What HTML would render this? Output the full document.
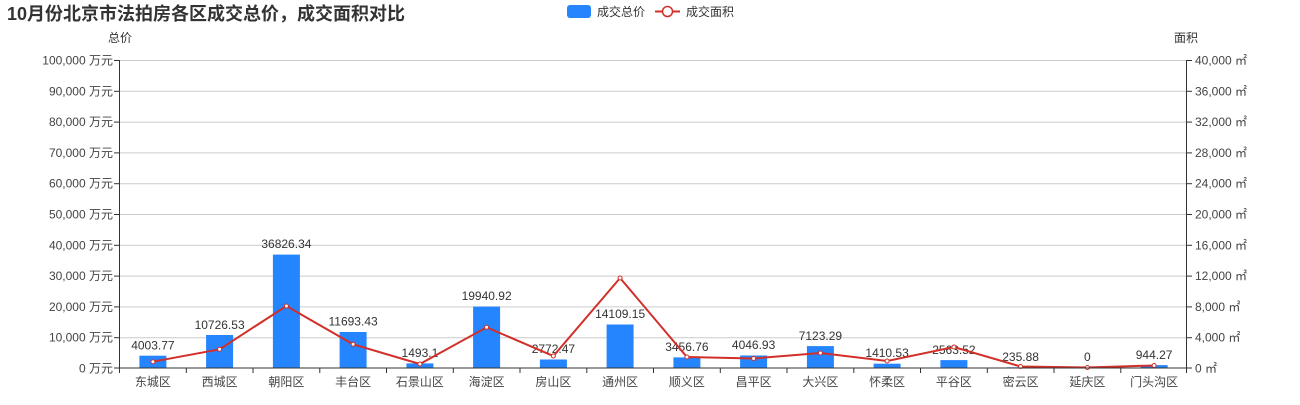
<!DOCTYPE html>
<html><head><meta charset="utf-8"><style>
body{margin:0;background:#fff;width:1300px;height:400px;overflow:hidden}
svg text{font-family:"Liberation Sans","Noto Sans CJK SC",sans-serif}
</style></head><body>
<svg width="1300" height="400" xmlns="http://www.w3.org/2000/svg">
<text x="7" y="20" font-size="18" font-weight="bold" fill="#333">10月份北京市法拍房各区成交总价，成交面积对比</text>
<rect x="567" y="5" width="24" height="13" rx="3" fill="#2585fe"/>
<text x="597" y="16" font-size="12" fill="#333">成交总价</text>
<line x1="655" y1="11.5" x2="680" y2="11.5" stroke="#d22f28" stroke-width="2"/>
<circle cx="667.5" cy="11.5" r="5" fill="#fff" stroke="#d22f28" stroke-width="1.5"/>
<text x="686" y="16" font-size="12" fill="#333">成交面积</text>
<text x="120" y="42" font-size="12" fill="#333" text-anchor="middle">总价</text>
<text x="1186" y="42" font-size="12" fill="#333" text-anchor="middle">面积</text>
<g stroke="#ccc" stroke-width="1">
<line x1="119" y1="60.5" x2="1186" y2="60.5"/><line x1="119" y1="91.3" x2="1186" y2="91.3"/>
<line x1="119" y1="122.1" x2="1186" y2="122.1"/><line x1="119" y1="152.9" x2="1186" y2="152.9"/>
<line x1="119" y1="183.7" x2="1186" y2="183.7"/><line x1="119" y1="214.5" x2="1186" y2="214.5"/>
<line x1="119" y1="245.3" x2="1186" y2="245.3"/><line x1="119" y1="276.1" x2="1186" y2="276.1"/>
<line x1="119" y1="306.9" x2="1186" y2="306.9"/><line x1="119" y1="337.7" x2="1186" y2="337.7"/>
</g>
<g font-size="12" fill="#444" text-anchor="end">
<text x="113" y="64.5">100,000 万元</text><text x="113" y="95.3">90,000 万元</text>
<text x="113" y="126.1">80,000 万元</text><text x="113" y="156.9">70,000 万元</text>
<text x="113" y="187.7">60,000 万元</text><text x="113" y="218.5">50,000 万元</text>
<text x="113" y="249.3">40,000 万元</text><text x="113" y="280.1">30,000 万元</text>
<text x="113" y="310.9">20,000 万元</text><text x="113" y="341.7">10,000 万元</text>
<text x="113" y="372.5">0 万元</text>
</g>
<g font-size="12" fill="#444">
<text x="1195" y="64.5">40,000 ㎡</text><text x="1195" y="95.3">36,000 ㎡</text>
<text x="1195" y="126.1">32,000 ㎡</text><text x="1195" y="156.9">28,000 ㎡</text>
<text x="1195" y="187.7">24,000 ㎡</text><text x="1195" y="218.5">20,000 ㎡</text>
<text x="1195" y="249.3">16,000 ㎡</text><text x="1195" y="280.1">12,000 ㎡</text>
<text x="1195" y="310.9">8,000 ㎡</text><text x="1195" y="341.7">4,000 ㎡</text>
<text x="1195" y="372.5">0 ㎡</text>
</g>
<g fill="#2585fe">
<rect x="139.4" y="355.7" width="27" height="12.3"/>
<rect x="206.1" y="335" width="27" height="33"/>
<rect x="272.9" y="254.6" width="27" height="113.4"/>
<rect x="339.6" y="332" width="27" height="36"/>
<rect x="406.4" y="363.4" width="27" height="4.6"/>
<rect x="473.1" y="306.6" width="27" height="61.4"/>
<rect x="539.9" y="359.5" width="27" height="8.5"/>
<rect x="606.6" y="324.5" width="27" height="43.5"/>
<rect x="673.4" y="357.4" width="27" height="10.6"/>
<rect x="740.1" y="355.5" width="27" height="12.5"/>
<rect x="806.9" y="346.1" width="27" height="21.9"/>
<rect x="873.6" y="363.7" width="27" height="4.3"/>
<rect x="940.4" y="360.1" width="27" height="7.9"/>
<rect x="1007.1" y="367.3" width="27" height="0.7"/>
<rect x="1140.6" y="365.1" width="27" height="2.9"/>
</g>
<g font-size="12" fill="#333" text-anchor="middle">
<text x="152.9" y="349.5">4003.77</text>
<text x="219.6" y="329">10726.53</text>
<text x="286.4" y="248">36826.34</text>
<text x="353.1" y="325.5">11693.43</text>
<text x="419.9" y="357">1493.1</text>
<text x="486.6" y="300">19940.92</text>
<text x="553.4" y="353">2772.47</text>
<text x="620.1" y="318">14109.15</text>
<text x="686.9" y="351">3456.76</text>
<text x="753.6" y="349">4046.93</text>
<text x="820.4" y="340">7123.29</text>
<text x="887.1" y="357">1410.53</text>
<text x="953.9" y="354">2563.52</text>
<text x="1020.6" y="361">235.88</text>
<text x="1087.4" y="361">0</text>
<text x="1154.1" y="359">944.27</text>
</g>
<polyline fill="none" stroke="#d22f28" stroke-width="2" points="152.9,361.7 219.6,349.3 286.4,306 353.1,344.3 419.9,364 486.6,327.3 553.4,356 620.1,278 686.9,357 753.6,358.5 820.4,353 887.1,361 953.9,347 1020.6,366.5 1087.4,367.5 1154.1,365.5"/>
<g fill="#fff" stroke="#d22f28" stroke-width="1">
<circle cx="152.9" cy="361.7" r="2"/><circle cx="219.6" cy="349.3" r="2"/><circle cx="286.4" cy="306" r="2"/><circle cx="353.1" cy="344.3" r="2"/><circle cx="419.9" cy="364" r="2"/><circle cx="486.6" cy="327.3" r="2"/><circle cx="553.4" cy="356" r="2"/><circle cx="620.1" cy="278" r="2"/><circle cx="686.9" cy="357" r="2"/><circle cx="753.6" cy="358.5" r="2"/><circle cx="820.4" cy="353" r="2"/><circle cx="887.1" cy="361" r="2"/><circle cx="953.9" cy="347" r="2"/><circle cx="1020.6" cy="366.5" r="2"/><circle cx="1087.4" cy="367.5" r="2"/><circle cx="1154.1" cy="365.5" r="2"/>
</g>
<g stroke="#333" stroke-width="1">
<line x1="119.5" y1="60" x2="119.5" y2="368"/>
<line x1="1186.5" y1="60" x2="1186.5" y2="368"/>
<line x1="119" y1="368" x2="1187" y2="368"/>
<line x1="114" y1="60.5" x2="119" y2="60.5"/><line x1="114" y1="91.3" x2="119" y2="91.3"/><line x1="114" y1="122.1" x2="119" y2="122.1"/><line x1="114" y1="152.9" x2="119" y2="152.9"/><line x1="114" y1="183.7" x2="119" y2="183.7"/><line x1="114" y1="214.5" x2="119" y2="214.5"/><line x1="114" y1="245.3" x2="119" y2="245.3"/><line x1="114" y1="276.1" x2="119" y2="276.1"/><line x1="114" y1="306.9" x2="119" y2="306.9"/><line x1="114" y1="337.7" x2="119" y2="337.7"/><line x1="114" y1="368" x2="119" y2="368"/>
<line x1="1187" y1="60.5" x2="1192" y2="60.5"/><line x1="1187" y1="91.3" x2="1192" y2="91.3"/><line x1="1187" y1="122.1" x2="1192" y2="122.1"/><line x1="1187" y1="152.9" x2="1192" y2="152.9"/><line x1="1187" y1="183.7" x2="1192" y2="183.7"/><line x1="1187" y1="214.5" x2="1192" y2="214.5"/><line x1="1187" y1="245.3" x2="1192" y2="245.3"/><line x1="1187" y1="276.1" x2="1192" y2="276.1"/><line x1="1187" y1="306.9" x2="1192" y2="306.9"/><line x1="1187" y1="337.7" x2="1192" y2="337.7"/><line x1="1187" y1="368" x2="1192" y2="368"/>
<line x1="186.3" y1="368" x2="186.3" y2="373"/><line x1="253" y1="368" x2="253" y2="373"/><line x1="319.8" y1="368" x2="319.8" y2="373"/><line x1="386.5" y1="368" x2="386.5" y2="373"/><line x1="453.3" y1="368" x2="453.3" y2="373"/><line x1="520" y1="368" x2="520" y2="373"/><line x1="586.8" y1="368" x2="586.8" y2="373"/><line x1="653.5" y1="368" x2="653.5" y2="373"/><line x1="720.3" y1="368" x2="720.3" y2="373"/><line x1="787" y1="368" x2="787" y2="373"/><line x1="853.8" y1="368" x2="853.8" y2="373"/><line x1="920.5" y1="368" x2="920.5" y2="373"/><line x1="987.3" y1="368" x2="987.3" y2="373"/><line x1="1054" y1="368" x2="1054" y2="373"/><line x1="1120.8" y1="368" x2="1120.8" y2="373"/><line x1="119.5" y1="368" x2="119.5" y2="373"/><line x1="1186.5" y1="368" x2="1186.5" y2="373"/>
</g>
<g font-size="12" fill="#444" text-anchor="middle">
<text x="152.9" y="386">东城区</text><text x="219.6" y="386">西城区</text><text x="286.4" y="386">朝阳区</text><text x="353.1" y="386">丰台区</text><text x="419.9" y="386">石景山区</text><text x="486.6" y="386">海淀区</text><text x="553.4" y="386">房山区</text><text x="620.1" y="386">通州区</text><text x="686.9" y="386">顺义区</text><text x="753.6" y="386">昌平区</text><text x="820.4" y="386">大兴区</text><text x="887.1" y="386">怀柔区</text><text x="953.9" y="386">平谷区</text><text x="1020.6" y="386">密云区</text><text x="1087.4" y="386">延庆区</text><text x="1154.1" y="386">门头沟区</text>
</g>
</svg>
</body></html>
